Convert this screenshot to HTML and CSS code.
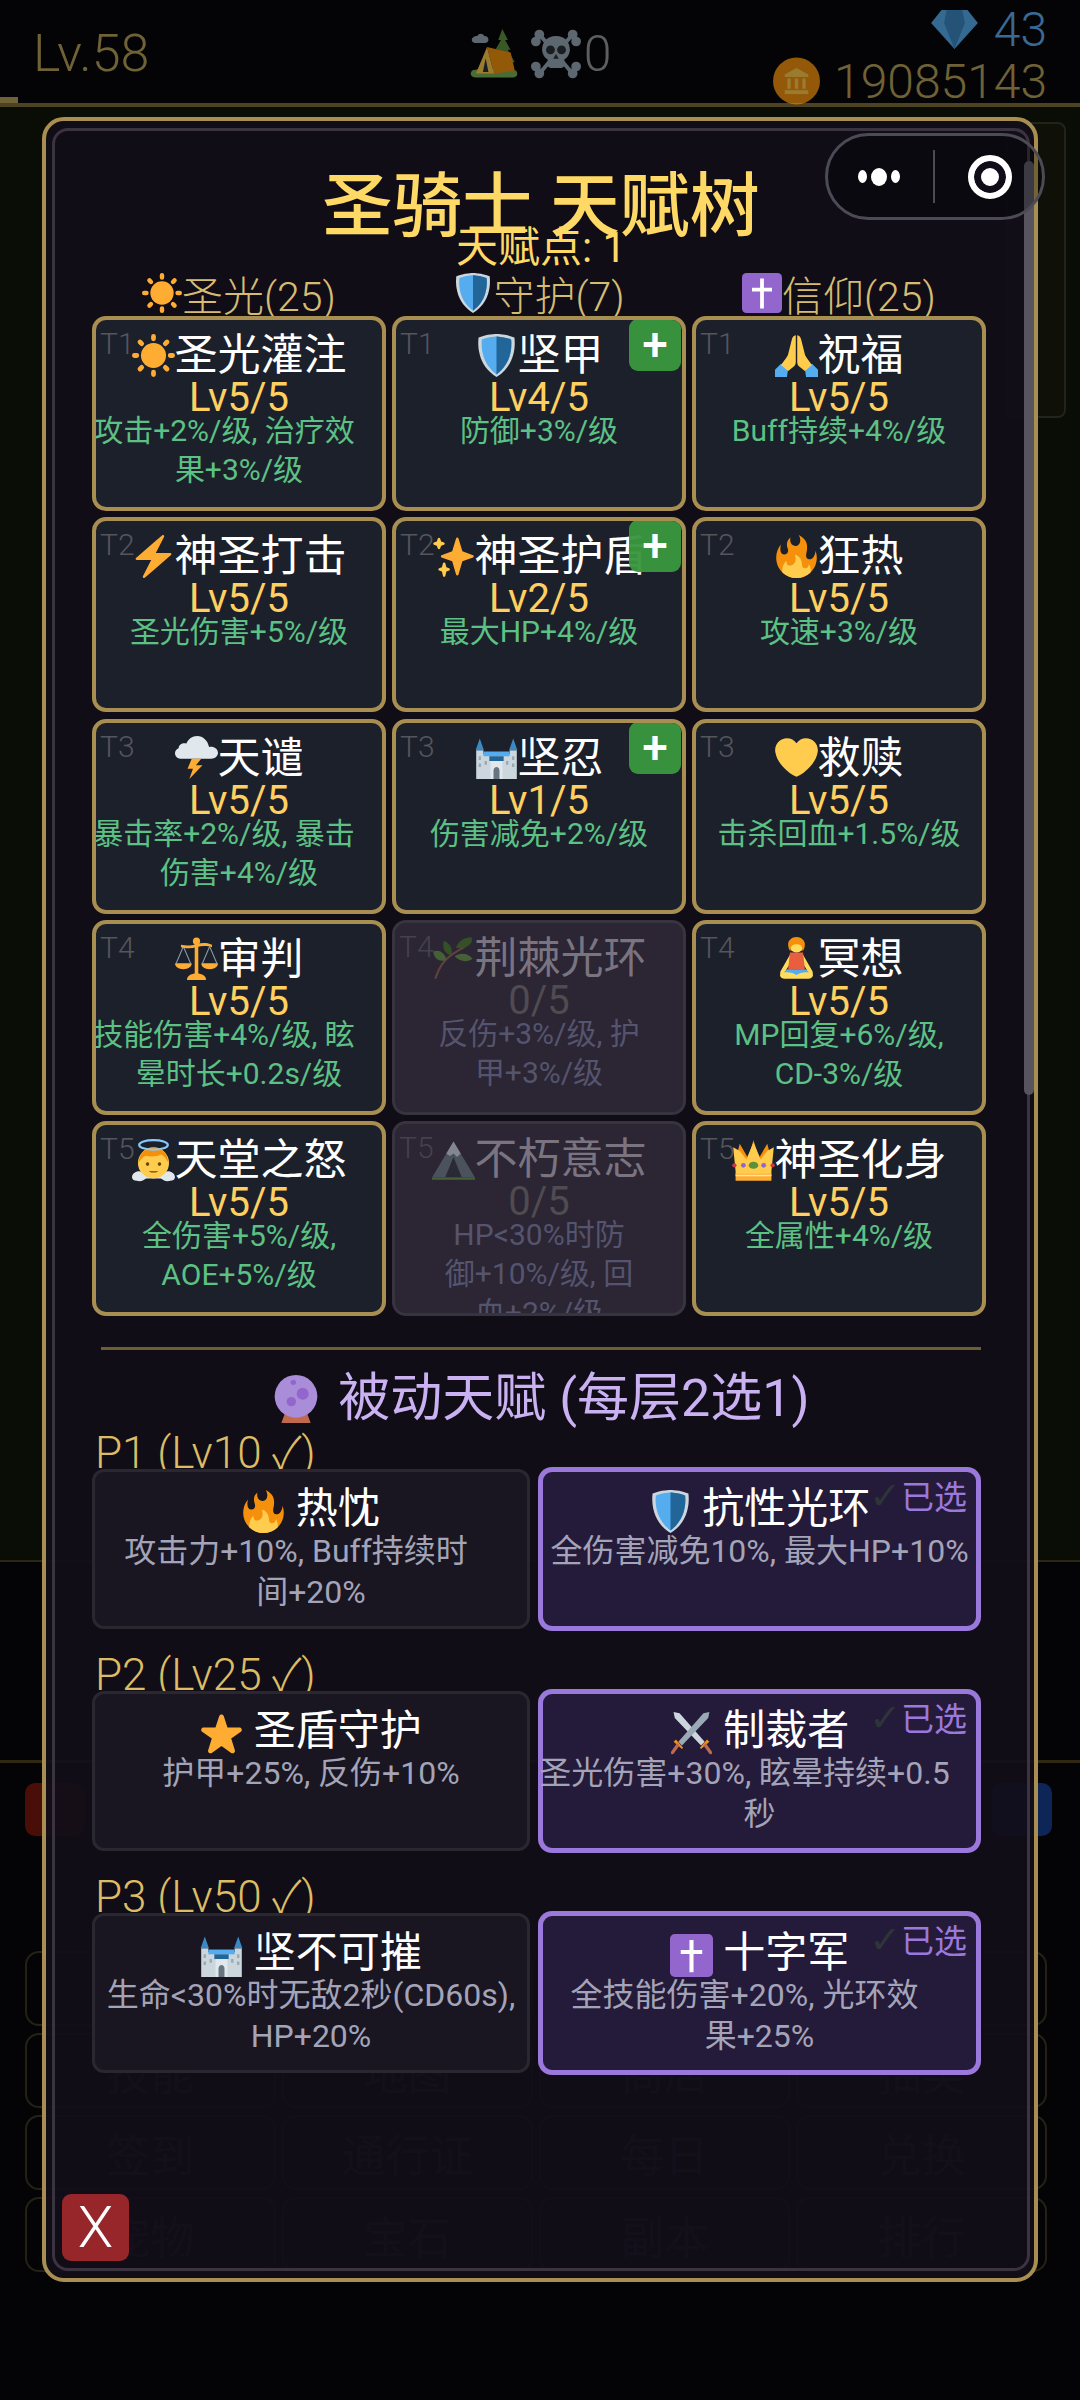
FILE: index.html
```html
<!doctype html>
<html>
<head>
	<title>圣骑士 天赋树</title>
	<meta charset="utf-8">
	<link rel="stylesheet" href="styles.css">
</head>

<body>
	<svg class="sprites" width="0" height="0">
		<symbol id="i-sun" viewBox="0 0 36 36">
			<circle cx="18" cy="18" r="10.5" fill="#FFAC33"/>
			<g stroke="#FFAC33" stroke-width="4" stroke-linecap="round">
				<path d="M18 2v2M18 32v2M2 18h2M32 18h2M6.700 6.700l1.400 1.400M27.900 27.900l1.400 1.400M6.700 29.300l1.400-1.400M27.900 8.100l1.400-1.400"/>
			</g>
		</symbol>
		<symbol id="i-shield" viewBox="0 0 36 36">
			<path fill="#CCD6DD" d="M33 3c-7-3-15-3-15-3S10 0 3 3C2 11 3 27 18 36 33 27 34 11 33 3z"/>
			<path fill="#55ACEE" d="M18 33.884C6.412 25.538 4.84 12.665 5.761 4.5 11.779 2.134 18 2 18 2s6.22.134 12.239 2.5C31.160 12.665 29.588 25.538 18 33.884z"/>
			<path fill="#226699" d="M18 2s6.22.134 12.239 2.5c.921 8.165-.65 21.038-12.239 29.384V2z"/>
		</symbol>
		<symbol id="i-cross" viewBox="0 0 36 36">
			<rect width="36" height="36" rx="4" fill="#9266CC"/>
			<path fill="#fff" d="M16.300 5h3.400v8.300H27v3.400h-7.300V32h-3.400V16.700H9v-3.400h7.300z"/>
		</symbol>
		<symbol id="i-pray" viewBox="0 0 36 36">
			<path fill="#55ACEE" d="M0 36v-6l5-5 6 4-1 7zM36 36v-6l-5-5-6 4 1 7z"/>
			<path fill="#FFCC4D" d="M17.400 1c-2 0-3 2-3.400 4L11 17c-.6 2.400-4.600 7-6 9l6 5 5-4c1-1 1.400-2 1.400-4zM18.600 1c2 0 3 2 3.400 4l3 12c.6 2.400 4.600 7 6 9l-6 5-5-4c-1-1-1.400-2-1.400-4z"/>
		</symbol>
		<symbol id="i-bolt" viewBox="0 0 36 36">
			<path fill="#FFAC33" d="M32.938 15.651C32.792 15.26 32.418 15 32 15H19.925L26.89 1.458c.219-.426.106-.947-.271-1.243C26.437.071 26.218 0 26 0c-.233 0-.466.082-.653.243L18 6.588 3.347 19.243c-.316.273-.43.714-.284 1.105S3.582 21 4 21h12.075L9.11 34.542c-.219.426-.106.947.271 1.243.182.144.401.215.619.215.233 0 .466-.082.653-.243L18 29.412l14.653-12.655c.317-.273.43-.714.285-1.106z"/>
		</symbol>
		<symbol id="i-sparkles" viewBox="0 0 36 36">
			<path fill="#FFAC33" d="M34.347 16.893l-8.899-3.294-3.323-10.891c-.128-.42-.517-.708-.956-.708-.439 0-.828.288-.956.708l-3.322 10.891-8.9 3.294c-.393.146-.653.519-.653.938 0 .418.26.793.653.938l8.895 3.293 3.324 11.223c.126.424.516.715.959.715.442 0 .833-.291.959-.716l3.324-11.223 8.896-3.293c.391-.144.652-.518.652-.937 0-.418-.261-.792-.653-.938z"/>
			<path fill="#FFCC4D" d="M14.347 27.894l-2.314-.856-.9-3.3c-.118-.436-.513-.738-.964-.738-.451 0-.846.302-.965.737l-.9 3.3-2.313.856c-.393.145-.653.52-.653.938 0 .418.26.793.653.938l2.301.853.907 3.622c.112.444.511.756.97.756.459 0 .858-.312.97-.757l.907-3.622 2.301-.853c.393-.144.653-.519.653-.937 0-.418-.26-.793-.653-.937zM10.009 6.231l-2.364-.875-.876-2.365c-.145-.393-.519-.653-.938-.653-.418 0-.792.26-.938.653l-.875 2.365-2.365.875c-.393.146-.653.52-.653.938 0 .418.26.793.653.938l2.365.875.875 2.365c.146.393.52.653.938.653.418 0 .792-.26.938-.653l.875-2.365 2.365-.875c.393-.146.653-.52.653-.938 0-.418-.26-.792-.653-.938z"/>
		</symbol>
		<symbol id="i-fire" viewBox="0 0 36 36">
			<path fill="#F4900C" d="M35 19c0-2.062-.367-4.039-1.04-5.868-.46 5.389-3.333 8.157-6.335 6.868-2.812-1.208-.917-5.917-.777-8.164.236-3.809-.012-8.169-6.931-11.794 2.875 5.5.333 8.917-2.333 9.125-2.958.231-5.667-2.542-4.667-7.042-3.238 2.386-3.332 6.402-2.333 9 1.042 2.708-.042 4.958-2.583 5.208-2.84.28-4.418-3.041-2.963-8.333C2.52 10.965 1 14.805 1 19c0 9.389 7.611 17 17 17s17-7.611 17-17z"/>
			<path fill="#FFCC4D" d="M28.394 23.999c.148 3.084-2.561 4.293-4.019 3.709-2.106-.843-1.541-2.291-2.083-5.291s-2.625-5.083-5.708-6c2.25 6.333-1.247 8.667-3.08 9.084-1.872.426-3.753-.001-3.968-4.007C7.352 23.668 6 26.676 6 30c0 .368.023.73.053 1.089C9.125 34.149 13.333 36 18 36s8.875-1.851 11.947-4.911c.03-.359.053-.721.053-1.089 0-2.183-.568-4.212-1.606-6.001z"/>
		</symbol>
		<symbol id="i-storm" viewBox="0 0 36 36">
			<path fill="#E1E8ED" d="M30 9c-.5 0-1 .05-1.500.15C27.500 4 23.500 0 18.500 0c-4 0-7.500 2.600-9 6.300C8.900 6.100 8.300 6 7.500 6 5 6 3 8 3 10.300 1.300 11 0 12.500 0 14.300 0 16.900 2 19 4.500 19h25.800c3.200 0 5.700-2.300 5.700-5 0-2.800-2.700-5-6-5z"/>
			<path fill="#FFAC33" d="M22 19h-8l-3.500 8.500H15L12 36l11-11.500h-5.500z"/>
		</symbol>
		<symbol id="i-castle" viewBox="0 0 36 36">
			<path fill="#CCD6DD" d="M1 12h6v3h22v-3h6v24H1z"/>
			<path fill="#3B88C3" d="M4 2l3.500 10h-7zM32 2l3.500 10h-7z"/>
			<path fill="#55ACEE" d="M7 13h22v4H7z"/>
			<path fill="#269" d="M12 17h12v4H12z"/>
			<path fill="#99AAB5" d="M3 17h2v3H3zM3 23h2v3H3zM31 17h2v3h-2zM31 23h2v3h-2zM8 21h2v3H8zM26 21h2v3h-2z"/>
			<path fill="#E1E8ED" d="M13 21h10v15H13z"/>
			<path fill="#66757F" d="M15.500 29c0-4 5-4 5 0v7h-5z"/>
		</symbol>
		<symbol id="i-heart" viewBox="0 0 36 36">
			<path fill="#FFCC4D" d="M35.885 11.833c0-5.45-4.418-9.868-9.867-9.868-3.308 0-6.227 1.633-8.018 4.129-1.791-2.496-4.71-4.129-8.017-4.129-5.45 0-9.868 4.417-9.868 9.868 0 .772.098 1.52.266 2.241C1.751 22.587 11.216 31.568 18 34.034c6.783-2.466 16.249-11.447 17.617-19.959.17-.721.268-1.469.268-2.242z"/>
		</symbol>
		<symbol id="i-scales" viewBox="0 0 36 36">
			<g fill="none" stroke="#8899A6" stroke-width=".9">
				<path d="M7 8L1 22M7 8l6 14M29 8l-6 14M29 8l6 14"/>
			</g>
			<path fill="#FFAC33" d="M16.500 5h3v26h-3z"/>
			<circle cx="18" cy="3.500" r="3" fill="#FFAC33"/>
			<path fill="#FFAC33" d="M5 6.500c5 1 9 .5 13-.5s8-1.500 13 .5v2c-5-1.500-9-1-13 0s-8 1.500-13 0z"/>
			<path fill="#FFAC33" d="M0 22h14c0 3-3 5-7 5s-7-2-7-5zM22 22h14c0 3-3 5-7 5s-7-2-7-5z"/>
			<path fill="#FFAC33" d="M10 36c0-3.500 3-5.500 8-5.500s8 2 8 5.500z"/>
		</symbol>
		<symbol id="i-herb" viewBox="0 0 36 36">
			<path fill="none" stroke="#8a5a44" stroke-width="1.800" stroke-linecap="round" d="M3 35c3-9 7-15 13-19s10-6 14-9"/>
			<path fill="#3E721D" d="M33 1c2 5-3 10-13 9 2-6 7-9 13-9zM10 4c5 2 8 7 6 12-5-1-8-6-6-12z"/>
			<path fill="#5C913B" d="M1 13c5-2 10 1 11 7-5 2-10 0-11-7zM34 19c-4 3-10 3-15-2 4-3 11-3 15 2z"/>
		</symbol>
		<symbol id="i-meditate" viewBox="0 0 36 36">
			<path fill="#FFDC5D" d="M13 14L5 28c-2 3 1 4 3 4h20c2 0 5-1 3-4L23 14l-1 6 5 8H9l5-8z"/>
			<path fill="#E85E3F" d="M12.500 13h11l1.500 14H11z"/>
			<path fill="#55ACEE" d="M10 27h16l3 3-11 4-11-4z"/>
			<path fill="#FFDC5D" d="M5 30c5-1 11 0 13 2 2-2 8-3 13-2 2 2 0 5-3 5H8c-3 0-5-3-3-5z"/>
			<circle cx="18" cy="7" r="6" fill="#FFDC5D"/>
			<path fill="#F4900C" d="M18 0c-4 0-7 3-7 6 0 3 1 5 2 6 0-4 1-6 5-6s5 2 5 6c1-1 2-3 2-6 0-3-3-6-7-6z"/>
		</symbol>
		<symbol id="i-angel" viewBox="0 0 36 36">
			<path fill="#E1E8ED" d="M0 32c0-3 3-5 6-5 3 0 5 2 6 4 4 1 8 1 12 0 1-2 3-4 6-4s6 2 6 5c0 2-2 3-4 3-4 1-6-1-8-2H12c-2 1-4 3-8 2-2 0-4-1-4-3z"/>
			<circle cx="18" cy="20" r="13" fill="#FFCC4D"/>
			<path fill="#F4900C" d="M5.500 20C6 12 11 7.500 18 7.500S30 12 30.500 20c-2-4-4-6-6-7-5 2-9 2-13 1-2 1-4.500 3-6 6z"/>
			<circle cx="13" cy="21" r="1.500" fill="#664500"/>
			<circle cx="23" cy="21" r="1.500" fill="#664500"/>
			<path fill="#664500" d="M14 27h8c-1 1.500-7 1.500-8 0z"/>
			<ellipse cx="18" cy="5" rx="12" ry="4" fill="none" stroke="#88C9F9" stroke-width="1.800"/>
		</symbol>
		<symbol id="i-mountain" viewBox="0 0 36 36">
			<path fill="#66757F" d="M18 3L0 33h36z"/>
			<path fill="#CCD6DD" d="M18 3l-6 10 3 2 3-2 3 3 3-3z"/>
			<path fill="#292F33" d="M18 16l-7 17h14z"/>
			<path fill="#5C913B" d="M0 33h36v2H0z"/>
		</symbol>
		<symbol id="i-crown" viewBox="0 0 36 36">
			<path fill="#F4900C" d="M14 17L6.500 4 3 17zM22 17l7.500-13L33 17zM18 1l-5 16h10z"/>
			<path fill="#FFCC4D" d="M29.500 10l-5.500 7L18 3l-6 14-5.500-7L1 7l2 20v3h30v-3l2-20z"/>
			<path fill="#FFAC33" d="M3 29h30v6H3z"/>
			<path fill="#FFE8A0" d="M3 30h30v1.200H3z"/>
			<ellipse cx="18" cy="22" rx="4" ry="3" fill="#5C913B"/>
			<circle cx="9.500" cy="22" r="2" fill="#9266CC"/>
			<circle cx="26.500" cy="22" r="2" fill="#9266CC"/>
			<circle cx="2" cy="22" r="1.800" fill="#DD2E44"/>
			<circle cx="34" cy="22" r="1.800" fill="#DD2E44"/>
		</symbol>
		<symbol id="i-orb" viewBox="0 0 36 36">
			<path fill="#C1694F" d="M10 28h16l3 8H7z"/>
			<circle cx="18" cy="16" r="16" fill="#AA8DD8"/>
			<circle cx="23" cy="14" r="4.500" fill="#9266CC"/>
			<circle cx="14.500" cy="20" r="3.500" fill="#9266CC"/>
			<circle cx="16" cy="5.500" r="2" fill="#9266CC"/>
		</symbol>
		<symbol id="i-star" viewBox="0 0 36 36">
			<path fill="#FFAC33" d="M27.287 34.627c-.404 0-.806-.124-1.152-.371L18 28.422l-8.135 5.834c-.693.496-1.623.496-2.312-.008-.689-.499-.979-1.385-.721-2.194l3.034-9.792-8.062-5.681c-.685-.505-.97-1.393-.708-2.203.264-.808 1.016-1.357 1.866-1.363L12.947 13l3.179-9.549c.268-.809 1.023-1.353 1.874-1.353.851 0 1.606.545 1.875 1.353L23 13l10.036.015c.853.006 1.606.556 1.867 1.363.263.81-.022 1.698-.708 2.203l-8.062 5.681 3.034 9.792c.26.809-.033 1.695-.72 2.194-.347.254-.753.379-1.16.379z"/>
		</symbol>
		<symbol id="i-swords" viewBox="0 0 36 36">
			<path fill="#CCD6DD" d="M3 0l5 1 21 24-3 3L4 5z"/>
			<path fill="#9AAAB4" d="M33 0l-5 1L7 25l3 3L32 5z"/>
			<path fill="#F4900C" d="M25 30l6-7 2 2-7 6zM11 30l-6-7-2 2 7 6z"/>
			<path fill="#C1694F" d="M28 28l2-2 5 7c1 2-1 3-2 2zM8 28l-2-2-5 7c-1 2 1 3 2 2z"/>
		</symbol>
		<symbol id="i-tent" viewBox="0 0 36 36">
			<path fill="#77B255" d="M2 30c5-2 27-2 32 0 2 3 0 5-3 5H5c-3 0-5-2-3-5z"/>
			<path fill="#5C913B" d="M24 0l4 8h-2l4 7h-2l5 9H16l5-9h-2l4-7h-2z"/>
			<path fill="#99AAB5" d="M2 8c0-2 2-3 4-3 1-2 4-2 5 0 2 0 3 1 3 3 0 1-1 2-2 2H4c-1 0-2-1-2-2z"/>
			<path fill="#F4900C" d="M13 13l17 4 3 13-15 2z"/>
			<path fill="#FFCC4D" d="M13 13L5 32h13z"/>
			<path fill="#292F33" d="M12 21l-2 10h4z"/>
		</symbol>
		<symbol id="i-skull" viewBox="0 0 36 36">
			<g fill="#99AAB5">
				<circle cx="6" cy="4" r="3.500"/><circle cx="3.500" cy="9" r="3.500"/>
				<circle cx="30" cy="4" r="3.500"/><circle cx="32.500" cy="9" r="3.500"/>
				<circle cx="6" cy="32" r="3.500"/><circle cx="3.500" cy="27" r="3.500"/>
				<circle cx="30" cy="32" r="3.500"/><circle cx="32.500" cy="27" r="3.500"/>
				<path d="M6 6l2-2 22 26-2 2zM30 6l-2-2L6 30l2 2z"/>
			</g>
			<path fill="#99AAB5" d="M18 5C11 5 8 10 8 15c0 3 2 6 4 7v4c0 1 1 2 2 2h8c1 0 2-1 2-2v-4c2-1 4-4 4-7 0-5-3-10-10-10z"/>
			<circle cx="14" cy="15" r="3.200" fill="#292F33"/>
			<circle cx="22" cy="15" r="3.200" fill="#292F33"/>
			<path fill="#292F33" d="M18 18l2 3.500h-4z"/>
		</symbol>
		<symbol id="i-gem" viewBox="0 0 36 30">
			<path fill="#55ACEE" d="M8 0h20l8 10-18 20L0 10z"/>
			<path fill="#3B88C3" d="M10 10h16l-8 20zM12 0h12l2 10H10z"/>
		</symbol>
		<symbol id="i-coin" viewBox="0 0 36 36">
			<circle cx="18" cy="18" r="18" fill="#F4900C"/>
			<path fill="#FFCC4D" d="M18 8l9 5v2H9v-2zM11 16h2.500v8H11zM16.700 16h2.600v8h-2.600zM22.500 16H25v8h-2.500zM9 25h18v3H9z"/>
		</symbol>
	</svg>

	<div class="topbar">
		<div class="lv">Lv.58</div>
		<div class="status">
			<svg class="ico top-ico tent-ico"><use href="#i-tent"/></svg>
			<svg class="ico top-ico"><use href="#i-skull"/></svg>
			<span>0</span>
		</div>
		<div class="wallet">
			<div class="wallet-row gems">
				<svg class="ico top-ico gem-ico"><use href="#i-gem"/></svg>
				<span>43</span>
			</div>
			<div class="wallet-row gold">
				<svg class="ico top-ico coin-ico"><use href="#i-coin"/></svg>
				<span>19085143</span>
			</div>
		</div>
	</div>
	<div class="exp-mark"></div>

	<div class="field">
		<div class="field-panel"></div>
	</div>
	<div class="gap"></div>
	<div class="hud">
		<div class="hud-side">
			<i class="hud-red"></i>
			<i class="hud-blue"></i>
		</div>
		<div class="menu">
			<div class="menu-item"></div>
			<div class="menu-item"></div>
			<div class="menu-item"></div>
			<div class="menu-item"></div>
			<div class="menu-item">技能</div>
			<div class="menu-item">地图</div>
			<div class="menu-item">商店</div>
			<div class="menu-item">抽奖</div>
			<div class="menu-item">签到</div>
			<div class="menu-item">通行证</div>
			<div class="menu-item">每日</div>
			<div class="menu-item">兑换</div>
			<div class="menu-item">宠物</div>
			<div class="menu-item">宝石</div>
			<div class="menu-item">副本</div>
			<div class="menu-item">排行</div>
		</div>
	</div>

	<div class="modal">
		<div class="modal-in">
			<h1 class="modal-title">圣骑士 天赋树</h1>
			<div class="modal-points">天赋点: 1</div>

			<div class="branches">
				<div class="branch"><svg class="ico branch-ico"><use href="#i-sun"/></svg>圣光(25)</div>
				<div class="branch"><svg class="ico branch-ico"><use href="#i-shield"/></svg>守护(7)</div>
				<div class="branch"><svg class="ico branch-ico"><use href="#i-cross"/></svg>信仰(25)</div>
			</div>

			<div class="tree">
				<div class="node">
					<span class="node-tier">T1</span>
					<div class="node-name"><svg class="ico"><use href="#i-sun"/></svg>圣光灌注</div>
					<div class="node-lv">Lv5/5</div>
					<div class="node-desc"><span class="line-over">攻击+2%/级, 治疗效</span>果+3%/级</div>
				</div>
				<div class="node">
					<span class="node-tier">T1</span>
					<div class="node-name"><svg class="ico"><use href="#i-shield"/></svg>坚甲</div>
					<div class="node-lv">Lv4/5</div>
					<div class="node-desc">防御+3%/级</div>
					<a class="node-add">+</a>
				</div>
				<div class="node">
					<span class="node-tier">T1</span>
					<div class="node-name"><svg class="ico"><use href="#i-pray"/></svg>祝福</div>
					<div class="node-lv">Lv5/5</div>
					<div class="node-desc">Buff持续+4%/级</div>
				</div>

				<div class="node">
					<span class="node-tier">T2</span>
					<div class="node-name"><svg class="ico"><use href="#i-bolt"/></svg>神圣打击</div>
					<div class="node-lv">Lv5/5</div>
					<div class="node-desc">圣光伤害+5%/级</div>
				</div>
				<div class="node">
					<span class="node-tier">T2</span>
					<div class="node-name"><svg class="ico"><use href="#i-sparkles"/></svg>神圣护盾</div>
					<div class="node-lv">Lv2/5</div>
					<div class="node-desc">最大HP+4%/级</div>
					<a class="node-add">+</a>
				</div>
				<div class="node">
					<span class="node-tier">T2</span>
					<div class="node-name"><svg class="ico"><use href="#i-fire"/></svg>狂热</div>
					<div class="node-lv">Lv5/5</div>
					<div class="node-desc">攻速+3%/级</div>
				</div>

				<div class="node">
					<span class="node-tier">T3</span>
					<div class="node-name"><svg class="ico"><use href="#i-storm"/></svg>天谴</div>
					<div class="node-lv">Lv5/5</div>
					<div class="node-desc"><span class="line-over">暴击率+2%/级, 暴击</span>伤害+4%/级</div>
				</div>
				<div class="node">
					<span class="node-tier">T3</span>
					<div class="node-name"><svg class="ico"><use href="#i-castle"/></svg>坚忍</div>
					<div class="node-lv">Lv1/5</div>
					<div class="node-desc">伤害减免+2%/级</div>
					<a class="node-add">+</a>
				</div>
				<div class="node">
					<span class="node-tier">T3</span>
					<div class="node-name"><svg class="ico"><use href="#i-heart"/></svg>救赎</div>
					<div class="node-lv">Lv5/5</div>
					<div class="node-desc">击杀回血+1.5%/级</div>
				</div>

				<div class="node">
					<span class="node-tier">T4</span>
					<div class="node-name"><svg class="ico"><use href="#i-scales"/></svg>审判</div>
					<div class="node-lv">Lv5/5</div>
					<div class="node-desc"><span class="line-over">技能伤害+4%/级, 眩</span>晕时长+0.2s/级</div>
				</div>
				<div class="node node-off">
					<span class="node-tier">T4</span>
					<div class="node-name"><svg class="ico"><use href="#i-herb"/></svg>荆棘光环</div>
					<div class="node-lv">0/5</div>
					<div class="node-desc">反伤+3%/级, 护<br>甲+3%/级</div>
				</div>
				<div class="node">
					<span class="node-tier">T4</span>
					<div class="node-name"><svg class="ico"><use href="#i-meditate"/></svg>冥想</div>
					<div class="node-lv">Lv5/5</div>
					<div class="node-desc">MP回复+6%/级,<br>CD-3%/级</div>
				</div>

				<div class="node">
					<span class="node-tier">T5</span>
					<div class="node-name"><svg class="ico"><use href="#i-angel"/></svg>天堂之怒</div>
					<div class="node-lv">Lv5/5</div>
					<div class="node-desc">全伤害+5%/级,<br>AOE+5%/级</div>
				</div>
				<div class="node node-off">
					<span class="node-tier">T5</span>
					<div class="node-name"><svg class="ico"><use href="#i-mountain"/></svg>不朽意志</div>
					<div class="node-lv">0/5</div>
					<div class="node-desc">HP&lt;30%时防<br>御+10%/级, 回<br>血+2%/级</div>
				</div>
				<div class="node">
					<span class="node-tier">T5</span>
					<div class="node-name"><svg class="ico"><use href="#i-crown"/></svg>神圣化身</div>
					<div class="node-lv">Lv5/5</div>
					<div class="node-desc">全属性+4%/级</div>
				</div>
			</div>

			<div class="rule"></div>
			<h2 class="passive-title"><svg class="ico"><use href="#i-orb"/></svg>被动天赋 (每层2选1)</h2>

			<div class="tier-label">P1 (Lv10 ✓)</div>
			<div class="tier">
				<div class="perk">
					<div class="perk-name"><svg class="ico"><use href="#i-fire"/></svg> 热忱</div>
					<div class="perk-desc"><span class="line-over">攻击力+10%, Buff持续时</span>间+20%</div>
				</div>
				<div class="perk perk-on">
					<span class="perk-tag"><b>✓</b>已选</span>
					<div class="perk-name"><svg class="ico"><use href="#i-shield"/></svg> 抗性光环</div>
					<div class="perk-desc">全伤害减免10%, 最大HP+10%</div>
				</div>
			</div>

			<div class="tier-label">P2 (Lv25 ✓)</div>
			<div class="tier">
				<div class="perk">
					<div class="perk-name"><svg class="ico"><use href="#i-star"/></svg> 圣盾守护</div>
					<div class="perk-desc">护甲+25%, 反伤+10%</div>
				</div>
				<div class="perk perk-on">
					<span class="perk-tag"><b>✓</b>已选</span>
					<div class="perk-name"><svg class="ico"><use href="#i-swords"/></svg> 制裁者</div>
					<div class="perk-desc"><span class="line-over">圣光伤害+30%, 眩晕持续+0.5</span>秒</div>
				</div>
			</div>

			<div class="tier-label">P3 (Lv50 ✓)</div>
			<div class="tier">
				<div class="perk">
					<div class="perk-name"><svg class="ico"><use href="#i-castle"/></svg> 坚不可摧</div>
					<div class="perk-desc">生命&lt;30%时无敌2秒(CD60s),<br>HP+20%</div>
				</div>
				<div class="perk perk-on">
					<span class="perk-tag"><b>✓</b>已选</span>
					<div class="perk-name"><svg class="ico"><use href="#i-cross"/></svg> 十字军</div>
					<div class="perk-desc"><span class="line-over">全技能伤害+20%, 光环效</span>果+25%</div>
				</div>
			</div>

			<i class="scrollbar"></i>
		</div>
		<a class="modal-close">X</a>
	</div>

	<div class="capsule">
		<div class="capsule-dots"><i></i><i></i><i></i></div>
		<i class="capsule-line"></i>
		<i class="capsule-ring"></i>
	</div>
</body>
</html>
```

FILE: styles.css
```css
* {
	box-sizing: border-box;
}
html, body, h1, h2 {
	margin: 0;
	padding: 0;
}
body {
	position: relative;
	width: 1080px;
	height: 2400px;
	overflow: hidden;
	background: #040406;
	font-family: Roboto, "Noto Sans CJK SC", sans-serif;
	font-weight: 400;
}
.sprites {
	position: absolute;
}
.ico {
	flex: none;
	width: 43px;
	height: 43px;
	vertical-align: middle;
}

/* page behind the dialog */
.topbar {
	display: grid;
	grid-template-columns: 1fr auto 1fr;
	height: 107px;
	padding: 0 33px;
	border-bottom: 4px solid #4d4322;
	font-weight: 300;
}
.lv {
	margin-top: 24px;
	font-size: 52px;
	line-height: 60px;
	color: #6f6236;
}
.status {
	display: flex;
	align-items: center;
	height: 60px;
	margin-top: 24px;
	font-size: 50px;
	color: #5c5f60;
}
.top-ico {
	width: 50px;
	height: 50px;
	margin-right: 3px;
	opacity: .6;
}
.tent-ico {
	margin-right: 12px;
}
.wallet {
	display: flex;
	flex-direction: column;
	align-items: flex-end;
}
.wallet-row {
	display: flex;
	align-items: center;
	height: 46px;
	font-size: 48px;
}
.gems {
	margin-top: 6px;
	color: #3a6a93;
}
.gold {
	margin-top: 4px;
	height: 50px;
	color: #6f6236;
}
.gem-ico {
	width: 47px;
	height: 39px;
	margin-right: 16px;
}
.coin-ico {
	width: 47px;
	height: 48px;
	margin-right: 14px;
}
.exp-mark {
	position: absolute;
	left: 0;
	top: 97px;
	width: 18px;
	height: 6px;
	background: #6f6236;
}
.field {
	height: 1455px;
	padding-top: 15px;
	background: #0a0c06;
	border-bottom: 2px solid #2b2713;
}
.field-panel {
	width: 60px;
	height: 296px;
	margin-left: 1006px;
	background: #0f1109;
	border: 2px solid #23231a;
	border-radius: 8px;
}
.gap {
	height: 201px;
	border-bottom: 3px solid #2f2914;
}
.hud {
	padding: 20px 33px 0 25px;
}
.hud-side {
	display: flex;
	justify-content: space-between;
	height: 168px;
}
.hud-red, .hud-blue {
	width: 60px;
	height: 53px;
	border-radius: 10px;
}
.hud-red {
	background: #4a0e08;
}
.hud-blue {
	margin-right: -5px;
	background: #0e2557;
}
.menu {
	display: grid;
	grid-template-columns: repeat(4, 1fr);
	grid-auto-rows: 75px;
	gap: 7px 6px;
}
.menu-item {
	display: flex;
	align-items: center;
	justify-content: center;
	border: 2px solid #252114;
	border-radius: 14px;
	font-size: 44px;
	color: #2f2d37;
}

/* dialog */
.modal {
	position: absolute;
	left: 42px;
	top: 117px;
	width: 996px;
	height: 2165px;
	padding: 7px 4px 7px 6px;
	background: rgba(17, 14, 25, .93);
	border: 4px solid #a88e50;
	border-radius: 22px;
}
.modal-in {
	position: relative;
	height: 100%;
	padding: 0 37px;
	border: 3px solid #3b3340;
	border-radius: 16px;
}
.modal-title {
	margin: 0 -37px;
	padding-top: 46px;
	font-size: 70px;
	font-weight: 500;
	line-height: 60px;
	text-align: center;
	color: #ffd966;
}
.modal-points {
	margin: -9px -37px 0;
	font-size: 42px;
	line-height: 40px;
	text-align: center;
	color: #ffd966;
}
.branches {
	display: grid;
	grid-template-columns: repeat(3, 294px);
	gap: 6px;
	margin-top: 5px;
}
.branch {
	display: flex;
	align-items: center;
	justify-content: center;
	height: 40px;
	font-size: 41px;
	font-weight: 300;
	color: #d6bc72;
}
.branch-ico {
	width: 40px;
	height: 40px;
}
.tree {
	display: grid;
	grid-template-columns: repeat(3, 294px);
	grid-auto-rows: 195px;
	gap: 6.25px 6px;
	margin-top: 3px;
}
.node {
	position: relative;
	padding: 11px 0 0;
	overflow: hidden;
	background: #1c202b;
	border: 4px solid #a88e50;
	border-radius: 14px;
	text-align: center;
}
.node-tier {
	position: absolute;
	left: 4px;
	top: 9px;
	font-size: 30px;
	font-weight: 300;
	line-height: 30px;
	color: #55555c;
}
.node-name {
	position: relative;
	z-index: 1;
	display: flex;
	align-items: center;
	justify-content: center;
	margin: 0 -20px;
	font-size: 43px;
	line-height: 48px;
	white-space: nowrap;
	color: #fff;
}
.node-lv {
	margin-top: -1px;
	font-size: 40px;
	line-height: 40px;
	color: #ffd060;
}
.node-desc {
	margin-top: -7px;
	font-size: 30px;
	line-height: 39px;
	color: #5cc184;
}
.line-over {
	display: block;
	white-space: nowrap;
	transform: translateX(-15px);
}
.node-add {
	position: absolute;
	right: 1px;
	top: -1px;
	z-index: 2;
	width: 52px;
	height: 52px;
	background: rgba(56, 150, 62, .96);
	border-radius: 9px;
	font-size: 46px;
	font-weight: 500;
	line-height: 50px;
	color: #fff;
}
.node-off {
	background: #2b2534;
	border: 3px solid #38343f;
}
.node-off .node-tier {
	color: #45414c;
}
.node-off .ico {
	opacity: .55;
}
.node-off .node-name {
	color: #7a7480;
}
.node-off .node-lv {
	color: #504b50;
}
.node-off .node-desc {
	color: #55546e;
}

/* passive talents */
.rule {
	height: 3px;
	margin: 31px 9px 0;
	background: #6d5d34;
}
.passive-title {
	display: block;
	margin-top: 19px;
	font-size: 52px;
	font-weight: 400;
	line-height: 60px;
	text-align: center;
	color: #c9b1f2;
}
.passive-title .ico {
	position: relative;
	top: -3px;
	width: 48px;
	height: 48px;
	margin-right: 18px;
}
.tier-label {
	margin: 26px 0 -4px 3px;
	font-size: 44px;
	font-weight: 300;
	line-height: 40px;
	color: #dcbc64;
}
.passive-title + .tier-label {
	margin-top: 4px;
}
.tier {
	position: relative;
	display: grid;
	grid-template-columns: 438px 439px;
	grid-auto-rows: 160px;
	gap: 10px;
}
.perk {
	position: relative;
	padding-top: 12px;
	background: #191622;
	border: 3px solid #2a2730;
	border-radius: 12px;
	text-align: center;
}
.perk-on {
	background: #241a3a;
	border-color: #9b78dc;
	box-shadow: 0 0 0 2px #9b78dc;
}
.perk-name {
	font-size: 42px;
	line-height: 50px;
	color: #fff;
}
.perk-desc {
	margin-top: -3px;
	font-size: 32px;
	line-height: 41px;
	color: #a4a4b8;
}
.perk-tag {
	position: absolute;
	right: 9px;
	top: 4px;
	font-size: 33px;
	line-height: 40px;
	color: #9b78dc;
}
.perk-tag b {
	font-family: "DejaVu Sans", sans-serif;
	font-size: 38px;
	font-weight: 400;
	color: #2e3538;
}
.scrollbar {
	position: absolute;
	right: -7px;
	top: 30px;
	width: 10px;
	height: 934px;
	background: #57535f;
	border-radius: 5px;
}
.modal-close {
	position: absolute;
	left: 16px;
	top: 2073px;
	width: 67px;
	height: 67px;
	background: #96262a;
	border-radius: 9px;
	font-size: 58px;
	font-weight: 300;
	line-height: 67px;
	text-align: center;
	color: #fff;
}

/* wechat capsule */
.capsule {
	position: absolute;
	left: 825px;
	top: 133px;
	display: flex;
	align-items: center;
	width: 220px;
	height: 87px;
	background: rgba(0, 0, 0, .3);
	border: 3px solid #4c4a55;
	border-radius: 44px;
}
.capsule-dots {
	display: flex;
	align-items: center;
	gap: 4px;
	margin-left: 30px;
}
.capsule-dots i {
	width: 9px;
	height: 13px;
	background: #fff;
	border-radius: 50%;
}
.capsule-dots i:nth-child(2) {
	width: 16px;
	height: 18px;
}
.capsule-line {
	width: 2px;
	height: 53px;
	margin-left: 33px;
	background: #4c4a55;
}
.capsule-ring {
	width: 44px;
	height: 44px;
	margin-left: 33px;
	background: #fff;
	border: 6px solid #fff;
	border-radius: 50%;
	box-shadow: inset 0 0 0 7px #100d19;
}
```
